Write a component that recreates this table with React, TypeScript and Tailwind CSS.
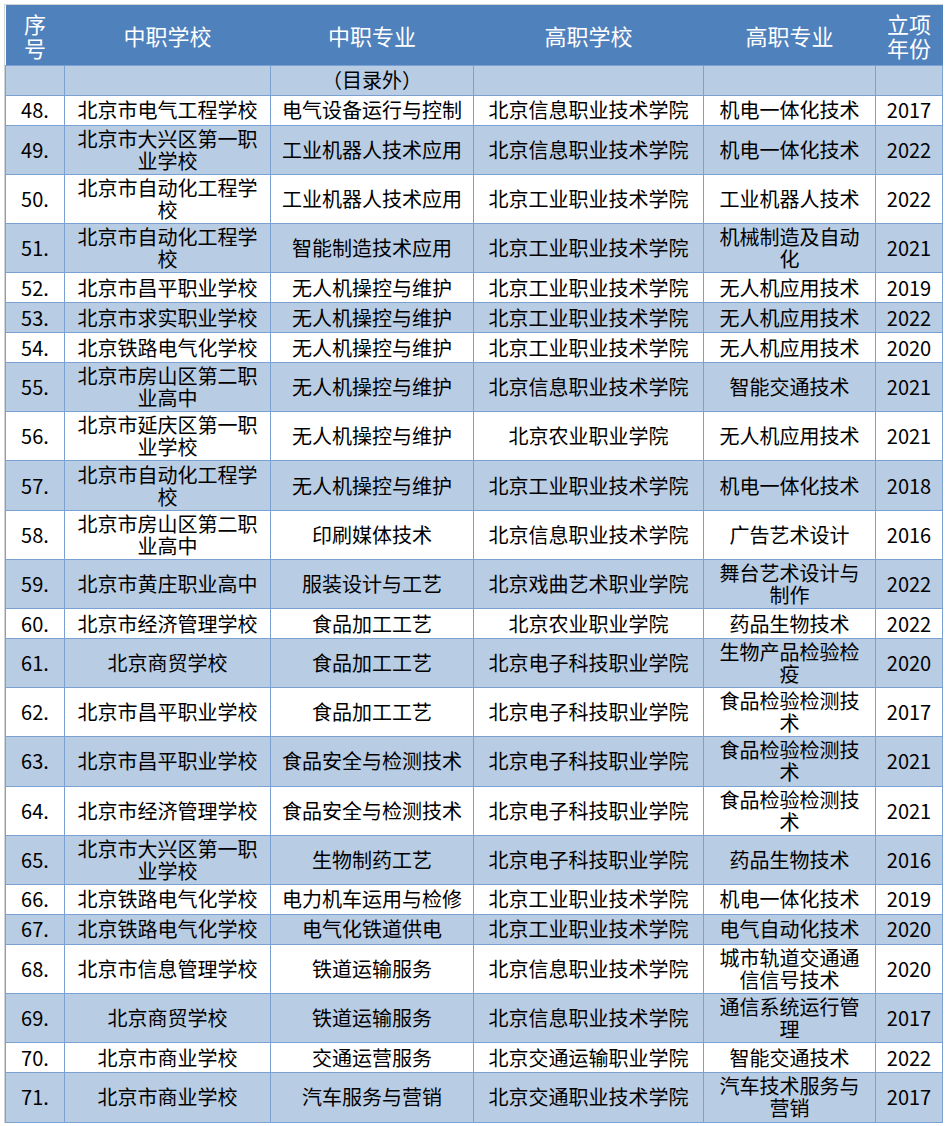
// 中高职衔接项目表（48–71）
type Row = [string, string, string, string, string, string];

const rows: Row[] = [
  ["48.", "北京市电气工程学校", "电气设备运行与控制", "北京信息职业技术学院", "机电一体化技术", "2017"],
  ["49.", "北京市大兴区第一职业学校", "工业机器人技术应用", "北京信息职业技术学院", "机电一体化技术", "2022"],
  ["50.", "北京市自动化工程学校", "工业机器人技术应用", "北京工业职业技术学院", "工业机器人技术", "2022"],
  ["51.", "北京市自动化工程学校", "智能制造技术应用", "北京工业职业技术学院", "机械制造及自动化", "2021"],
  ["52.", "北京市昌平职业学校", "无人机操控与维护", "北京工业职业技术学院", "无人机应用技术", "2019"],
  ["53.", "北京市求实职业学校", "无人机操控与维护", "北京工业职业技术学院", "无人机应用技术", "2022"],
  ["54.", "北京铁路电气化学校", "无人机操控与维护", "北京工业职业技术学院", "无人机应用技术", "2020"],
  ["55.", "北京市房山区第二职业高中", "无人机操控与维护", "北京信息职业技术学院", "智能交通技术", "2021"],
  ["56.", "北京市延庆区第一职业学校", "无人机操控与维护", "北京农业职业学院", "无人机应用技术", "2021"],
  ["57.", "北京市自动化工程学校", "无人机操控与维护", "北京工业职业技术学院", "机电一体化技术", "2018"],
  ["58.", "北京市房山区第二职业高中", "印刷媒体技术", "北京信息职业技术学院", "广告艺术设计", "2016"],
  ["59.", "北京市黄庄职业高中", "服装设计与工艺", "北京戏曲艺术职业学院", "舞台艺术设计与制作", "2022"],
  ["60.", "北京市经济管理学校", "食品加工工艺", "北京农业职业学院", "药品生物技术", "2022"],
  ["61.", "北京商贸学校", "食品加工工艺", "北京电子科技职业学院", "生物产品检验检疫", "2020"],
  ["62.", "北京市昌平职业学校", "食品加工工艺", "北京电子科技职业学院", "食品检验检测技术", "2017"],
  ["63.", "北京市昌平职业学校", "食品安全与检测技术", "北京电子科技职业学院", "食品检验检测技术", "2021"],
  ["64.", "北京市经济管理学校", "食品安全与检测技术", "北京电子科技职业学院", "食品检验检测技术", "2021"],
  ["65.", "北京市大兴区第一职业学校", "生物制药工艺", "北京电子科技职业学院", "药品生物技术", "2016"],
  ["66.", "北京铁路电气化学校", "电力机车运用与检修", "北京工业职业技术学院", "机电一体化技术", "2019"],
  ["67.", "北京铁路电气化学校", "电气化铁道供电", "北京工业职业技术学院", "电气自动化技术", "2020"],
  ["68.", "北京市信息管理学校", "铁道运输服务", "北京信息职业技术学院", "城市轨道交通通信信号技术", "2020"],
  ["69.", "北京商贸学校", "铁道运输服务", "北京信息职业技术学院", "通信系统运行管理", "2017"],
  ["70.", "北京市商业学校", "交通运营服务", "北京交通运输职业学院", "智能交通技术", "2022"],
  ["71.", "北京市商业学校", "汽车服务与营销", "北京交通职业技术学院", "汽车技术服务与营销", "2017"],
];

const td = "border border-[#7ba0d2] px-[6px] py-[2.1px] text-center align-middle leading-[22px]";
const th = "font-normal text-center align-middle";

export default function App() {
  return (
    <div
      className="bg-white pt-[4px] pl-[4px] min-h-screen"
      style={{ fontFamily: '"Noto Sans CJK SC", "Noto Sans", sans-serif' }}
    >
      <div className="border-t border-l border-[#d4d4d4] w-[939px]">
        <table className="border-collapse table-fixed w-[937px] text-[20px] text-black">
          <colgroup>
            <col className="w-[59px]" />
            <col className="w-[206px]" />
            <col className="w-[203px]" />
            <col className="w-[230px]" />
            <col className="w-[172px]" />
            <col className="w-[67px]" />
          </colgroup>
          <thead>
            <tr className="h-[60px] bg-[#4f81bd] text-white text-[22px] leading-[24px]">
              <th className={th}>
                <div className="h-[24px] leading-[24px]">序</div>
                <div className="h-[24px] leading-[24px]">号</div>
              </th>
              <th className={th}>中职学校</th>
              <th className={th}>中职专业</th>
              <th className={th}>高职学校</th>
              <th className={th}>高职专业</th>
              <th className={th}>
                <div className="h-[24px] leading-[24px]">立项</div>
                <div className="h-[24px] leading-[24px]">年份</div>
              </th>
            </tr>
          </thead>
          <tbody>
            <tr className="h-[30px] bg-[#b8cce4]">
              <td className={td}></td>
              <td className={td}></td>
              <td className={td}>（目录外）</td>
              <td className={td}></td>
              <td className={td}></td>
              <td className={td}></td>
            </tr>
            {rows.map((r, i) => (
              <tr key={r[0]} className={`h-[30px] ${i % 2 === 0 ? "bg-white" : "bg-[#b8cce4]"}`}>
                {r.map((c, j) => (
                  <td key={j} className={td}>{c}</td>
                ))}
              </tr>
            ))}
          </tbody>
        </table>
      </div>
    </div>
  );
}
